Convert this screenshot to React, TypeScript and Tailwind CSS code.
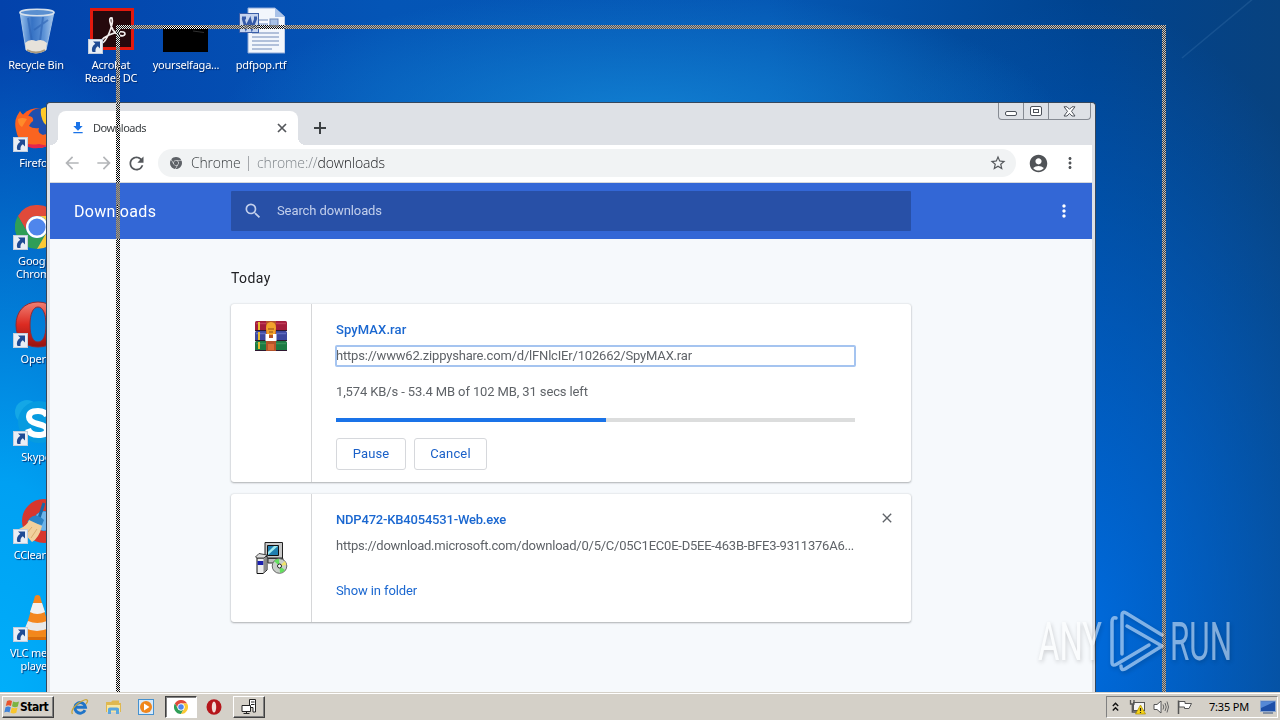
import { ReactNode } from "react";
import {
  MdAccountCircle,
  MdArrowBack,
  MdArrowForward,
  MdClose,
  MdFileDownload,
  MdMoreVert,
  MdRefresh,
  MdSearch,
  MdStarBorder,
} from "react-icons/md";
import { SiGooglechrome } from "react-icons/si";

const ChromeLogo = ({ size }: { size: number }) => (
  <svg width={size} height={size} viewBox="0 0 48 48">
    <path fill="#e04a3a" d="M24 12H44.8A24 24 0 0 0 3.2 12L13.6 30A12 12 0 0 1 24 12z" />
    <path fill="#2f9e57" d="M13.6 30L3.2 12A24 24 0 0 0 24 48L34.4 30A12 12 0 0 1 13.6 30z" />
    <path fill="#fbc934" d="M34.4 30L24 48A24 24 0 0 0 44.8 12H24A12 12 0 0 1 34.4 30z" />
    <circle cx="24" cy="24" r="12" fill="#fff" />
    <circle cx="24" cy="24" r="9.4" fill="#4f86ec" />
  </svg>
);

const RecycleBin = () => (
  <svg width="48" height="48" viewBox="0 0 48 48">
    <defs>
      <linearGradient id="bin" x1="0" x2="1">
        <stop offset="0" stopColor="#9cc4ee" />
        <stop offset=".35" stopColor="#3672c4" />
        <stop offset=".7" stopColor="#5c92d6" />
        <stop offset="1" stopColor="#a9caee" />
      </linearGradient>
    </defs>
    <path d="M8 6L14 44Q24 50 34 44L42 6z" fill="url(#bin)" stroke="#9fc0e6" strokeWidth="1" />
    <path d="M16 12L20 36M31 11L28 35M22 24L36 14" stroke="#2b62b4" strokeWidth="2" opacity=".6" />
    <path d="M13 37Q18 32 24 35Q30 32 35 37L34 44Q24 50 14 44z" fill="#e6e2da" />
    <path d="M15 44Q24 49 33 44" stroke="#a9997f" strokeWidth="2" fill="none" />
    <ellipse cx="25" cy="6.5" rx="17" ry="3.2" fill="#5a8fd0" stroke="#d5e0ec" strokeWidth="1.6" />
  </svg>
);

const Acrobat = () => (
  <svg width="48" height="48" viewBox="0 0 48 48">
    <rect x="3" y="2" width="44" height="42" fill="#e2190e" />
    <rect x="6" y="5" width="38" height="36" fill="#26090d" />
    <path
      d="M25 12C21 11 23 18 26 24C29 29 37 32 38 28C38 24 29 26 22 29C15 32 12 37 15 37C19 36 27 19 25 12z"
      fill="none"
      stroke="#f3eeee"
      strokeWidth="1.7"
    />
  </svg>
);

const BlackThumb = () => (
  <svg width="48" height="48" viewBox="0 0 48 48">
    <rect x="1" y="20" width="45" height="26" fill="#000" />
    <path d="M31 25l11 1.500" stroke="#303030" strokeWidth="1" />
  </svg>
);

const RtfDocument = () => (
  <svg width="48" height="48" viewBox="0 0 48 48">
    <path d="M11 2H38L48 11V47H11z" fill="#f2f6fc" stroke="#8ea9d6" />
    <path d="M38 2V11H48z" fill="#a9c2e8" />
    <path d="M22 14H31M22 18H31M15 27H42M15 31H42M15 35H42M15 39H42M15 43H35" stroke="#7189b8" strokeWidth="1.2" />
    <rect x="33" y="13" width="8" height="7" fill="#a7c0e5" stroke="#6d87b8" />
    <rect x="2.500" y="7.500" width="19" height="19" fill="#c4d3ee" stroke="#3a5ea8" />
    <path d="M6 12L9 22L13 14L15 22L19 12M5 12H9M17 12H20" fill="none" stroke="#355aa8" strokeWidth="2.800" />
  </svg>
);

const Firefox = () => (
  <svg width="48" height="48" viewBox="0 0 48 48">
    <circle cx="26" cy="24" r="20" fill="#ff5a1f" />
    <circle cx="29" cy="18" r="14" fill="#1f4fae" />
    <path d="M29 5Q34 1 47 5V25Q36 24 32 19Q28 12 29 5z" fill="#ffc928" />
    <path d="M5 12L8 7Q11 13 17 12Q22 13 21 17Q18 19 17 22Q21 25 27 24Q25 29 31 31Q34 29 40 32L37 42Q8 49 4 26Q2 18 5 12z" fill="#fb6420" />
    <path d="M5 31Q11 43 27 40L36 42Q14 50 5 31z" fill="#e5264d" />
    <path d="M6 15Q10 13 15 15L10 23Q6 21 6 15z" fill="#ff8a2a" />
  </svg>
);

const Opera = () => (
  <svg width="48" height="48" viewBox="0 0 48 48">
    <defs>
      <linearGradient id="opera" x1="0" x2="0" y1="0" y2="1">
        <stop offset="0" stopColor="#f08073" />
        <stop offset=".5" stopColor="#dc2b22" />
        <stop offset="1" stopColor="#951310" />
      </linearGradient>
    </defs>
    <path
      fillRule="evenodd"
      fill="url(#opera)"
      stroke="#8f2a35"
      strokeWidth="1"
      d="M26 2C12 2 4 12 4 25S12 47 26 47S48 38 48 25S40 2 26 2zM26 7C31 7 34 14 34 25S31 42 26 42S18 36 18 25S21 7 26 7z"
    />
  </svg>
);

const Skype = () => (
  <svg width="48" height="48" viewBox="0 0 48 48">
    <circle cx="15" cy="14" r="12" fill="#14a7e6" />
    <circle cx="27" cy="24" r="21" fill="#079be0" />
    <path
      d="M35 18Q33 13 26 13Q17 13 17 19Q17 24 26 26Q35 28 35 32Q35 37 26 37Q18 37 16 31"
      fill="none"
      stroke="#fff"
      strokeWidth="6"
    />
  </svg>
);

const CCleaner = () => (
  <svg width="48" height="48" viewBox="0 0 48 48">
    <circle cx="32" cy="25" r="16" fill="none" stroke="#d8372d" strokeWidth="12" />
    <circle cx="32" cy="25" r="9.500" fill="#6db4ea" />
    <path d="M32 7L27 22" stroke="#1868a8" strokeWidth="3" />
    <path d="M18 22Q24 16 32 24L30 29L15 26z" fill="#2b83c6" />
    <path d="M17 24L30 30Q27 42 20 46Q13 38 7 33Q15 30 17 24z" fill="#f1cf9c" />
    <path d="M20 31L15 37M25 33L19 42" stroke="#d9ac6e" />
  </svg>
);

const Vlc = () => (
  <svg width="48" height="48" viewBox="0 0 48 48">
    <path d="M10 33H41L47 46H5z" fill="#f08a1c" />
    <path d="M6 43H47V46H6z" fill="#d96c0c" />
    <path d="M23 2Q25.500 0 28 2L38 37Q25 45 13 37z" fill="#f4861c" />
    <path d="M21 9H30L33 18Q25 22 18 18z" fill="#f1f1f1" />
    <path d="M16 27Q25 31 35 27L37 34Q25 40 13 34z" fill="#e9e9e9" />
  </svg>
);

const ShortcutArrow = () => (
  <svg className="absolute bottom-0 left-px" width="15" height="15" viewBox="0 0 15 15">
    <rect x=".5" y=".5" width="14" height="14" fill="#e9eef5" stroke="#c3cedd" />
    <path d="M5 2.500H12V9.500L9.800 7.300Q7 9 7.500 13H4.500Q2.500 8 7.300 4.800z" fill="#1f4b94" />
  </svg>
);

const DesktopIcon = ({ icon, label, shortcut }: { icon: ReactNode; label: string; shortcut?: boolean }) => (
  <div className="flex h-[98px] w-[75px] shrink-0 flex-col items-center pt-1.5">
    <div className="relative h-12 w-12">
      {icon}
      {shortcut && <ShortcutArrow />}
    </div>
    <span className="mt-1 w-[75px] whitespace-pre pl-px text-center font-['Noto_Sans',sans-serif] text-[11px] leading-[13px] tracking-[-0.22px] text-white [text-shadow:1px_1px_1px_#00286a]">
      {label}
    </span>
  </div>
);

const WinRar = () => (
  <svg width="32" height="32" viewBox="0 0 32 32">
    <rect x="0" y="1" width="32" height="10" rx="1.500" fill="#a31d3b" />
    <rect x="0" y="11" width="32" height="10" rx="1.500" fill="#3c489f" />
    <rect x="0" y="21" width="32" height="10" rx="1.500" fill="#1c7a42" />
    <path d="M1 3.500H31" stroke="#c03c58" strokeWidth="1.500" />
    <path d="M1 13.500H31" stroke="#5f6cc0" strokeWidth="1.500" />
    <path d="M1 23.500H31" stroke="#35915a" strokeWidth="1.500" />
    <path d="M0 10.500H32M0 20.500H32M0 30.500H32" stroke="#2e1830" />
    <path d="M4 2V10M4 12V20M4 22V29" stroke="#e8bd2d" strokeWidth="2" />
    <rect x="11" y="1" width="10" height="30" fill="#b4532a" />
    <path d="M11 8Q11 2 16 2Q21 2 21 8L20 15H12z" fill="#f2a32c" />
    <path d="M13 9H19M14 12H18" stroke="#8f4c12" />
    <path d="M10.500 14V21H21.500V14H18V18H14V14z" fill="#fff" />
    <path d="M13 24H19V30H13z" fill="#d96d35" />
  </svg>
);

const Installer = () => (
  <svg width="34" height="34" viewBox="0 0 34 34">
    <path d="M11 1.500H28.500V17H11z" fill="#c9c9c9" stroke="#222" />
    <path d="M13.500 4.500H24.500V14.500H13.500z" fill="#1f7fb0" stroke="#111" />
    <path d="M14 11L20 5H24L14 14z" fill="#9ee9ee" />
    <path d="M14 17.500H29V22H14z" fill="#bdbdbd" stroke="#333" />
    <circle cx="25.500" cy="25" r="7.300" fill="#c9cfc9" stroke="#666" />
    <path d="M25.500 25L20 20Q22 18 25 17.800zM25.500 25L31 29Q29 32 26 32z" fill="#63e05e" />
    <path d="M25.500 25L31 20L32.500 24z" fill="#efe36a" />
    <circle cx="25.500" cy="25" r="2" fill="#fff" stroke="#222" />
    <path d="M3 17H10L13 15V29L9 32.500H3z" fill="#ededed" stroke="#111" />
    <path d="M3.500 20H9.500V24H3.500z" fill="#1b1fae" />
    <path d="M9.500 18L12.500 16V29L9.500 32z" fill="#8b8b8b" />
    <path d="M1.500 16L5 12.500L13 14L10 17H3z" fill="#ddd" stroke="#444" />
  </svg>
);

const WindowButtons = () => (
  <div className="flex h-[17px] w-[93px] rounded-b-[4px] border border-t-0 border-[#868b93]">
    <div className="flex w-[25px] items-end justify-center border-r border-[#868b93] pb-[3px]">
      <div className="h-[5px] w-3 rounded-[2px] border border-[#4d525a] bg-white" />
    </div>
    <div className="flex w-[25px] items-center justify-center border-r border-[#868b93]">
      <div className="flex h-[10px] w-3 items-center justify-center rounded-[2px] border border-[#4d525a] bg-white">
        <div className="h-1 w-[6px] border border-[#4d525a]" />
      </div>
    </div>
    <div className="flex flex-1 items-center justify-center">
      <svg width="13" height="11" viewBox="0 0 13 11">
        <path
          d="M1 .8H4L6.500 3.300L9 .8H12L8.500 5.300L12 10H9L6.500 7.400L4 10H1L4.500 5.300z"
          fill="#fff"
          stroke="#4d525a"
          strokeWidth="1"
        />
      </svg>
    </div>
  </div>
);

const TabStrip = () => (
  <div className="flex h-[42px] justify-between bg-[#dee1e6]">
    <div className="flex items-end pl-2">
      <div className="relative flex h-[34px] w-[240px] items-center rounded-t-lg bg-white pl-3 pr-[9px]">
        <div className="absolute -left-2 bottom-0 h-2 w-2 bg-[radial-gradient(circle_at_0_0,#dee1e6_8px,#fff_8px)]" />
        <div className="absolute -right-2 bottom-0 h-2 w-2 bg-[radial-gradient(circle_at_100%_0,#dee1e6_8px,#fff_8px)]" />
        <MdFileDownload size={16} color="#1a73e8" />
        <span className="ml-[7px] flex-1 font-['Noto_Sans',sans-serif] text-[11px] tracking-[-0.52px] text-[#3c4043]">Downloads</span>
        <svg width="14" height="14" viewBox="0 0 14 14">
          <path d="M3 3L11 11M11 3L3 11" stroke="#54575b" strokeWidth="1.700" />
        </svg>
      </div>
      <svg className="mb-[10px] ml-[15px]" width="14" height="14" viewBox="0 0 14 14">
        <path d="M1 7H13M7 1V13" stroke="#3c4043" strokeWidth="2" />
      </svg>
    </div>
    <div className="pr-px">
      <WindowButtons />
    </div>
  </div>
);

const ToolbarIcon = ({ children }: { children: ReactNode }) => (
  <div className="flex h-7 w-7 items-center justify-center">{children}</div>
);

const Toolbar = () => (
  <div className="flex h-[38px] items-center border-b border-[#d5d8dc] bg-white pb-px pl-2">
    <div className="flex gap-1">
      <ToolbarIcon><MdArrowBack size={20} color="#b4b6b9" /></ToolbarIcon>
      <ToolbarIcon><MdArrowForward size={20} color="#b4b6b9" /></ToolbarIcon>
      <ToolbarIcon><MdRefresh size={21} color="#55585c" /></ToolbarIcon>
    </div>
    <div className="ml-2 flex h-7 w-[858px] items-center rounded-full bg-[#f1f3f4] pl-3 pr-[9px] font-['Open_Sans',sans-serif] text-sm font-light">
      <SiGooglechrome size={12} color="#5f6368" />
      <span className="ml-[9px] w-[57px] pb-px tracking-[-0.2px] text-[#3c4043]">Chrome</span>
      <span className="mr-2 h-[15px] w-px bg-[#a5a8ac]" />
      <span className="flex-1 pb-px tracking-[-0.12px] text-[#80868b]">
        chrome://<span className="text-[#202124]">downloads</span>
      </span>
      <MdStarBorder size={18} color="#55585c" />
    </div>
    <div className="ml-2 flex gap-1">
      <ToolbarIcon><MdAccountCircle size={21} color="#505357" /></ToolbarIcon>
      <ToolbarIcon><MdMoreVert size={18} color="#505357" /></ToolbarIcon>
    </div>
  </div>
);

const PageHeader = () => (
  <div className="flex h-14 items-center bg-[#3367d6] pl-6 pr-[18px] text-white">
    <h1 className="w-[157px] pt-[2px] text-base tracking-[0.3px]">Downloads</h1>
    <div className="flex h-10 w-[680px] items-center rounded-[1px] bg-[#2850a7] pl-3 text-[#c2cfec]">
      <MdSearch size={20} />
      <span className="ml-[14px] text-[13px] tracking-[-0.1px]">Search downloads</span>
    </div>
    <MdMoreVert className="ml-auto" size={20} />
  </div>
);

const Card = ({ icon, children, className }: { icon: ReactNode; children: ReactNode; className: string }) => (
  <div className={`flex w-[680px] rounded-[3px] bg-white shadow-[0_1px_2px_rgba(60,64,67,.35),0_0_2px_rgba(60,64,67,.2)] ${className}`}>
    <div className="flex w-[81px] justify-center border-r border-[#d6d7d9]">{icon}</div>
    {children}
  </div>
);

const CardButton = ({ children, className }: { children: ReactNode; className: string }) => (
  <button className={`h-8 rounded-[3px] border border-[#d6d8dc] text-[13px] tracking-[0.15px] text-[#1a60c8] ${className}`}>
    {children}
  </button>
);

const Downloads = () => (
  <div className="h-[453px] bg-[#f6f9fc] pl-[181px] pt-[29px]">
    <h2 className="h-9 text-[14px] leading-5 tracking-[0.4px] text-[#202124]">Today</h2>
    <Card className="h-[178px]" icon={<div className="pt-4"><WinRar /></div>}>
      <div className="flex w-[543px] flex-col pl-6 pt-4">
        <span className="h-5 text-[13px] font-medium leading-5 tracking-[0.1px] text-[#1a67d0]">SpyMAX.rar</span>
        <span className="mt-[6px] h-5 w-[519px] rounded-[1px] text-[13px] leading-5 tracking-[-0.19px] text-[#5f6368] outline-2 -outline-offset-1 outline-[#a5c4f0]">
          https://www62.zippyshare.com/d/lFNlcIEr/102662/SpyMAX.rar
        </span>
        <span className="mt-4 text-[13px] leading-5 tracking-[-0.12px] text-[#5f6368]">1,574 KB/s - 53.4 MB of 102 MB, 31 secs left</span>
        <div className="mt-4 h-1 w-[519px] shrink-0 bg-[#dcdddd]">
          <div className="h-full w-[270px] bg-[#1a73e8]" />
        </div>
        <div className="mt-4 flex gap-2">
          <CardButton className="w-[70px]">Pause</CardButton>
          <CardButton className="w-[73px]">Cancel</CardButton>
        </div>
      </div>
    </Card>
    <Card className="mt-3 h-32" icon={<div className="pt-[47px]"><Installer /></div>}>
      <div className="flex w-[543px] flex-col pl-6 pt-4">
        <span className="h-5 text-[13px] font-medium leading-5 tracking-[-0.19px] text-[#1a67d0]">NDP472-KB4054531-Web.exe</span>
        <span className="mt-[6px] whitespace-nowrap text-[13px] leading-5 tracking-[-0.23px] text-[#5f6368]">
          https://download.microsoft.com/download/0/5/C/05C1EC0E-D5EE-463B-BFE3-9311376A6...
        </span>
        <span className="mt-[25px] text-[13px] leading-5 tracking-[-0.1px] text-[#1a67d0]">Show in folder</span>
      </div>
      <MdClose className="ml-6 mt-4" size={16} color="#5f6368" />
    </Card>
  </div>
);

const BrowserWindow = () => (
  <div className="absolute left-[46px] top-[102px] h-[590px] w-[1050px] overflow-hidden rounded-t-[4px] border border-b-0 border-[#36475c] bg-[#dee1e6] px-[3px] font-[Roboto,sans-serif]">
    <TabStrip />
    <Toolbar />
    <PageHeader />
    <Downloads />
  </div>
);

// outline left behind while a window is dragged, inverts whatever is below it
const DragOutline = () => (
  <>
    <div className="pointer-events-none absolute left-[116px] top-[25px] h-[667px] w-[1050px] mix-blend-difference">
      <div className="flex h-full flex-col">
        <div className="h-1 bg-[repeating-conic-gradient(#fff_0_25%,#000_0_50%)] bg-[length:2px_2px]" />
        <div className="flex flex-1 justify-between">
          <div className="w-1 bg-[repeating-conic-gradient(#fff_0_25%,#000_0_50%)] bg-[length:2px_2px]" />
          <div className="w-1 bg-[repeating-conic-gradient(#fff_0_25%,#000_0_50%)] bg-[length:2px_2px]" />
        </div>
      </div>
    </div>
    <div className="pointer-events-none absolute left-[116px] top-[25px] h-[671px] w-[1050px] border-4 border-[#808080] opacity-85 mix-blend-saturation" />
  </>
);

const Watermark = () => (
  <svg
    className="absolute left-[1030px] top-[604px] overflow-visible opacity-50 drop-shadow-[1px_2px_2px_rgba(0,0,0,0.35)]"
    width="240"
    height="76"
    viewBox="0 0 240 76"
  >
    <g fill="#fff" fontFamily="Roboto, sans-serif" fontSize="53" fontWeight="400">
      <text x="8" y="56" textLength="64" lengthAdjust="spacingAndGlyphs">ANY</text>
      <text x="140" y="56" textLength="62" lengthAdjust="spacingAndGlyphs">RUN</text>
    </g>
    <g fill="none" stroke="#fff" strokeWidth="3.500" strokeLinecap="round" strokeLinejoin="round">
      <path d="M86 14Q82 13 82 18V58Q82 63 87 60L119 41" />
      <path d="M92 50V11Q92 7 96 9L132 31" />
      <path d="M97 22L132 42L95 65Q91 67 91 62" />
    </g>
  </svg>
);

const StartFlag = () => (
  <svg width="16" height="16" viewBox="0 0 16 16">
    <path d="M3 2Q5.500 .5 8 2L7 7Q4.500 5.500 1.800 7z" fill="#e8532b" />
    <path d="M9 2.500Q12 4 15 2.500L13.800 7.500Q11 9 8 7.300z" fill="#7cb342" />
    <path d="M1.500 8.200Q4 6.800 6.800 8.200L5.500 13.500Q3 12 .3 13.500z" fill="#3f83d8" />
    <path d="M7.800 8.500Q10.500 10 13.500 8.600L12.300 13.800Q9.500 15.300 6.500 13.800z" fill="#f8c52c" />
  </svg>
);

const InternetExplorer = () => (
  <svg width="18" height="18" viewBox="0 0 18 18">
    <path d="M14 12.200A5.300 5.300 0 1 1 14.500 9.300H4.500" fill="none" stroke="#1f74c8" strokeWidth="3" />
    <path d="M1.500 16Q-1 12 7 5.500Q15 0 16.500 2.500Q17 4 15 6" fill="none" stroke="#c9a63a" strokeWidth="1.300" />
  </svg>
);

const Explorer = () => (
  <svg width="17" height="16" viewBox="0 0 17 16">
    <path d="M1 3H6L7.500 1.500H14V4H16V13H1z" fill="#dfb850" />
    <path d="M2 6H15V13H2z" fill="#f8e6a0" />
    <path d="M3 15V10Q3 8.500 5 8.500H12Q14 8.500 14 10V15H11V11.500H6V15z" fill="#5aa6de" />
  </svg>
);

const MediaPlayer = () => (
  <svg width="16" height="16" viewBox="0 0 16 16">
    <rect x=".5" y=".5" width="15" height="15" fill="#d8eafa" stroke="#4591cf" />
    <circle cx="8" cy="8" r="6" fill="#f0861c" />
    <path d="M6 4.500L11.500 8L6 11.500z" fill="#fff" />
  </svg>
);

const TaskOpera = () => (
  <svg width="16" height="16" viewBox="0 0 16 16">
    <ellipse cx="8" cy="8" rx="7.500" ry="7.800" fill="#b5161b" />
    <ellipse cx="8" cy="8" rx="2.200" ry="5.500" fill="#f2dcd8" />
  </svg>
);

const Computers = () => (
  <svg width="16" height="16" viewBox="0 0 16 16">
    <path d="M8.500 .5H14.500V13H12V8.500H8.500z" fill="#fff" stroke="#222" />
    <path d="M10 3H13.500M10 5.500H13.500" stroke="#222" />
    <path d="M1 6.500H9.500V12.500H1z" fill="#fff" stroke="#222" />
    <path d="M5.500 12.500V14.500M2.500 14.500H8.500" stroke="#222" />
  </svg>
);

const Tray = () => (
  <div className="flex h-[22px] w-[172px] items-center border border-b-white border-l-[#808080] border-r-white border-t-[#808080] pl-[5px]">
    <svg width="7" height="10" viewBox="0 0 7 10">
      <path d="M.8 4L3.500 1.300L6.200 4M.8 8.500L3.500 5.800L6.200 8.500" fill="none" stroke="#111" strokeWidth="1.400" />
    </svg>
    <svg className="ml-[10px]" width="17" height="16" viewBox="0 0 17 16">
      <rect x="4.500" y="3.500" width="11" height="8" fill="#f4f4f4" stroke="#555" />
      <path d="M1.500 1V5H5V1M3.300 5V13H8" fill="none" stroke="#555" strokeWidth="1.300" />
      <path d="M11.500 6L16.500 15H6.500z" fill="#f7d417" stroke="#a98c00" strokeWidth=".7" />
      <path d="M11.500 9V12M11.500 13V14" stroke="#222" strokeWidth="1.200" />
    </svg>
    <svg className="ml-[7px]" width="16" height="16" viewBox="0 0 16 16">
      <path d="M1 5.500H4L8 2V14L4 10.500H1z" fill="#fff" stroke="#555" />
      <path d="M10 5.500Q11.500 8 10 10.500M12 4Q14.500 8 12 12M14 2.500Q17 8 14 13.500" fill="none" stroke="#666" />
    </svg>
    <svg className="ml-[7px]" width="17" height="16" viewBox="0 0 17 16">
      <path d="M2.500 1.500V15" stroke="#555" strokeWidth="1.500" />
      <path d="M3 2.500H9V4.500H15.500L13 9.500H8.500V8H3z" fill="#fff" stroke="#555" />
    </svg>
    <span className="ml-4 w-[51px] whitespace-nowrap font-['Noto_Sans',sans-serif] text-[11px] tracking-[-0.2px] text-black">7:35 PM</span>
    <svg width="16" height="14" viewBox="0 0 16 14">
      <rect x=".5" y="1" width="15" height="10.500" fill="#1d4fa8" stroke="#8ba6cf" />
      <path d="M1 1.500H15L1 8z" fill="#5588d6" />
      <path d="M3 13H13" stroke="#33507f" />
    </svg>
  </div>
);

const Taskbar = () => (
  <div className="flex h-7 items-center justify-between border-t border-[#d4d0c8] bg-[#d4d0c8] px-[2px] shadow-[inset_0_1px_0_#fff]">
    <div className="flex h-full items-center pt-px">
      <button className="flex h-[22px] w-[52px] items-center border border-b-[#404040] border-l-white border-r-[#404040] border-t-white pl-px shadow-[inset_-1px_-1px_0_#808080]">
        <StartFlag />
        <span className="font-['DejaVu_Sans_Condensed','DejaVu_Sans',sans-serif] text-[12px] font-bold tracking-[-0.5px] text-black">Start</span>
      </button>
      <div className="ml-[17px] flex items-center gap-4">
        <InternetExplorer />
        <Explorer />
        <MediaPlayer />
      </div>
      <div className="ml-[11px] flex h-[22px] w-8 items-center justify-center border border-b-white border-l-[#404040] border-r-white border-t-[#404040] bg-white shadow-[inset_1px_1px_0_#808080]">
        <ChromeLogo size={14} />
      </div>
      <div className="ml-[9px]">
        <TaskOpera />
      </div>
      <div className="ml-[11px] flex h-[22px] w-8 items-center justify-center border border-b-[#404040] border-l-white border-r-[#404040] border-t-white shadow-[inset_-1px_-1px_0_#808080]">
        <Computers />
      </div>
    </div>
    <div className="pt-px">
      <Tray />
    </div>
  </div>
);

export default function App() {
  return (
    <div className="flex h-[720px] w-[1280px] flex-col overflow-hidden">
      <div className="relative isolate h-[692px] overflow-hidden bg-[radial-gradient(420px_130px_at_640px_120px,#1180d2_0%,transparent_100%),radial-gradient(300px_680px_at_0_720px,#00b0fb_0%,#00a0f2_35%,transparent_100%),radial-gradient(340px_640px_at_1080px_640px,#006bdd_0%,transparent_100%),linear-gradient(90deg,#0342ab_0%,#0455b6_30%,#0558b4_60%,#00438f_85%,#08427f_100%)]">
        <svg className="absolute right-0 top-0" width="120" height="80" viewBox="0 0 120 80">
          <path d="M94 -2L22 58" stroke="#5c92c4" strokeWidth="1.500" opacity=".2" />
        </svg>
        <div className="-ml-[2px] flex">
          <div className="flex flex-col">
            <DesktopIcon icon={<RecycleBin />} label="Recycle Bin" />
            <DesktopIcon icon={<Firefox />} label="Firefox" shortcut />
            <DesktopIcon
              icon={<div className="pl-[3px] pt-[3px]"><ChromeLogo size={44} /></div>}
              label={"Google\nChrome"}
              shortcut
            />
            <DesktopIcon icon={<Opera />} label="Opera" shortcut />
            <DesktopIcon icon={<Skype />} label="Skype" shortcut />
            <DesktopIcon icon={<CCleaner />} label="CCleaner" shortcut />
            <DesktopIcon icon={<Vlc />} label={"VLC media\nplayer"} shortcut />
          </div>
          <DesktopIcon icon={<Acrobat />} label={"Acrobat\nReader DC"} shortcut />
          <DesktopIcon icon={<BlackThumb />} label="yourselfaga..." />
          <DesktopIcon icon={<RtfDocument />} label="pdfpop.rtf" />
        </div>
        <BrowserWindow />
        <DragOutline />
        <Watermark />
      </div>
      <Taskbar />
    </div>
  );
}
